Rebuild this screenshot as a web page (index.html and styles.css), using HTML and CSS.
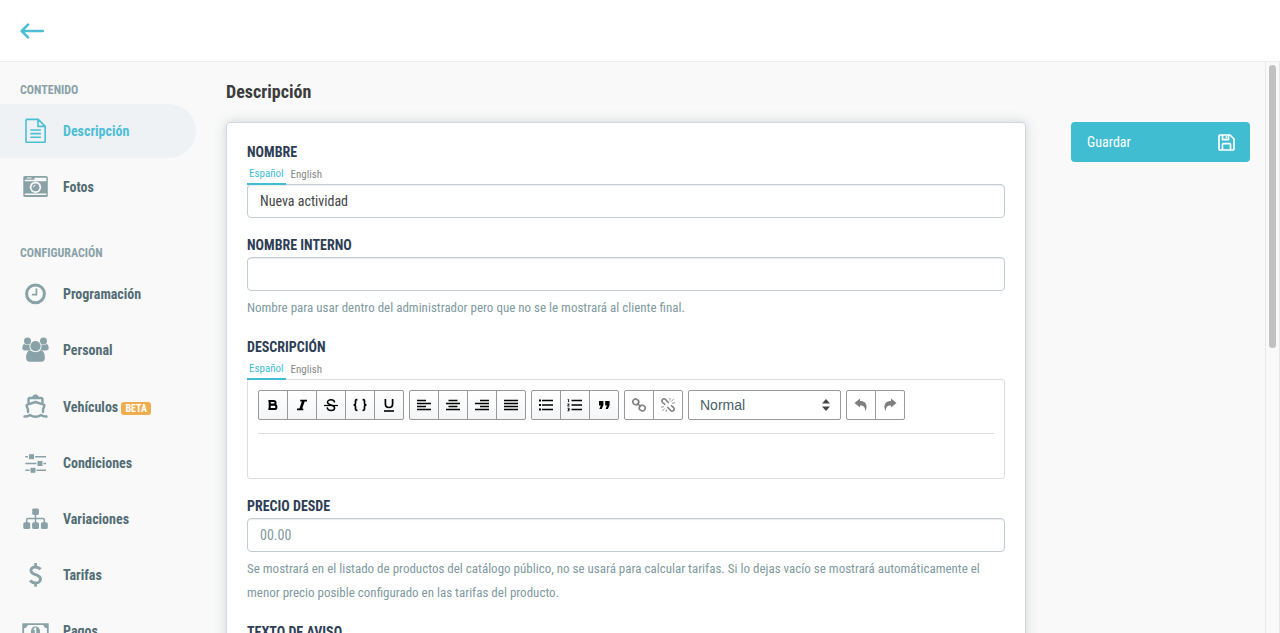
FILE: index.html
```html
<!DOCTYPE html>
<html lang="es">
<head>
<meta charset="utf-8">
<meta name="viewport" content="width=device-width, initial-scale=1">
<title>Descripción</title>
<link rel="stylesheet" href="styles.css">
</head>
<body>
<header class="topbar">
  <a class="back" href="#" aria-label="Volver">
    <svg width="25" height="16" viewBox="0 0 25 16" fill="none" stroke="currentColor" stroke-width="2.6" stroke-linecap="round" stroke-linejoin="round"><path d="M22.800 8H2M8 1.700L1.700 8L8 14.300"/></svg>
  </a>
</header>
<div class="shell">
  <nav class="sidebar">
    <h2 class="nav-title">Contenido</h2>
    <ul class="nav-list">
      <li><a class="nav-item active" href="#"><svg class="nav-icon" viewBox="0 0 31 30"><path d="M6.800 3.400h11.400l7 7V25.500a.8.800 0 0 1-.8.800H6.800a.8.800 0 0 1-.8-.8V4.200a.8.800 0 0 1 .8-.8zM18 3.500v6.900h7M10.300 14h10.600M10.300 17.600h10.600M10.300 21.200h10.600" fill="none" stroke="currentColor" stroke-width="1.600"/></svg>Descripción</a></li>
      <li><a class="nav-item" href="#"><svg class="nav-icon" viewBox="0 0 31 30"><rect x="3.300" y="4" width="24.500" height="21" rx="1.600" fill="currentColor"/><path d="M14.500 5.800H26.300V9.200H4.800V7.800h9.700zM7 5.600h4.500v.8H7zM4.800 21.600h21.500v1.500H4.800z" fill="#f9f9f9"/><circle cx="15.500" cy="15.300" r="5.700" fill="#f9f9f9"/><circle cx="15.500" cy="15.300" r="3.900" fill="currentColor"/><path d="M13.400 15.300a2.100 2.100 0 0 1 2.100-2.100" fill="none" stroke="#f9f9f9" stroke-width=".9"/></svg>Fotos</a></li>
    </ul>
    <h2 class="nav-title">Configuración</h2>
    <ul class="nav-list">
      <li><a class="nav-item" href="#"><svg class="nav-icon" viewBox="0 0 31 30" fill="none" stroke="currentColor"><circle cx="15.500" cy="14.800" r="8.900" stroke-width="3"/><path d="M16.400 9.600v6h-4.500" stroke-width="1.700"/></svg>Programación</a></li>
      <li><a class="nav-item" href="#"><svg class="nav-icon" viewBox="0 0 31 30" fill="currentColor"><circle cx="7.500" cy="6" r="3.500"/><circle cx="23.500" cy="6" r="3.500"/><path d="M4.500 9C5.500 10 8 10.300 9.600 9.300c-.5 2.400 0 4.300 1.300 6.100H5.200c-1.900 0-3-.9-2.900-2.500.1-1.800.8-3.900 2.200-3.900zM26.500 9c-1 1-3.500 1.300-5.100.3.500 2.400 0 4.300-1.300 6.100h5.700c1.900 0 3-.9 2.900-2.500-.1-1.800-.8-3.900-2.200-3.900z"/><circle cx="15.500" cy="11.200" r="5.100"/><path d="M10.600 15.600c3.200 2.200 6.600 2.200 9.800 0 3.100-.2 4.500 3.400 4.500 7.200 0 2.600-1.300 4-3.700 4H9.800c-2.400 0-3.700-1.400-3.700-4 0-3.800 1.400-7.400 4.500-7.200z"/></svg>Personal</a></li>
      <li><a class="nav-item with-badge" href="#"><svg class="nav-icon" viewBox="0 0 31 30" fill="none" stroke="currentColor" stroke-width="2.400" stroke-linecap="round" stroke-linejoin="round"><path d="M8.500 10.500V7.500q0-1.500 1.500-1.500H21q1.500 0 1.500 1.500v3M13.500 4.700q2-2.600 4 0M8 20V17.500L6.600 14q-.3-1 .7-1.400L15.500 10l8.200 2.600q1 .4.700 1.400L23 17.500V20M4.500 24.500q3.500.2 5.500-1.500 2.500 1.800 5.500 1.800T21 23q2 1.700 5.500 1.500"/></svg><span>Vehículos <span class="badge">BETA</span></span></a></li>
      <li><a class="nav-item" href="#"><svg class="nav-icon" viewBox="0 0 31 30" fill="currentColor"><path d="M5.300 8h20.700v1.400H5.300zM5.300 14.800h20.700v1.400H5.300zM5.300 21.600h20.700V23H5.300z"/><g stroke="#f9f9f9"><rect x="8.500" y="5.700" width="6" height="6" rx="1.200"/><rect x="17" y="12.500" width="6" height="6" rx="1.200"/><rect x="10" y="19.300" width="6" height="6" rx="1.200"/></g></svg>Condiciones</a></li>
      <li><a class="nav-item" href="#"><svg class="nav-icon" viewBox="0 0 31 30" fill="currentColor"><rect x="12.200" y="4.400" width="6.700" height="6.500" rx="1.400"/><rect x="3.300" y="18.300" width="6.900" height="6.800" rx="1.600"/><rect x="12.100" y="18.300" width="6.900" height="6.800" rx="1.600"/><rect x="20.900" y="18.300" width="6.900" height="6.800" rx="1.600"/><path d="M15.500 10v9M6.700 19v-3.200q0-1.300 1.300-1.300h15q1.300 0 1.300 1.300V19" fill="none" stroke="currentColor" stroke-width="1.500"/></svg>Variaciones</a></li>
      <li><a class="nav-item" href="#"><svg class="nav-icon" viewBox="0 0 31 30" fill="none" stroke="currentColor"><path d="M15.600 3v4M15.600 22.500v4.300" stroke-width="2.600"/><path d="M20.700 9.200C18.800 7.600 17.300 7 15.300 7c-2.500 0-4.300 1.300-4.300 3.400 0 5 9.500 3.400 9.500 8.600 0 2.400-2 4-4.900 4-2.200 0-4.100-.9-5.500-2.500" stroke-width="2.900"/></svg>Tarifas</a></li>
      <li><a class="nav-item" href="#"><svg class="nav-icon" viewBox="0 0 31 30"><path d="M3.200 8.200h24.600v14H3.200z" fill="none" stroke="currentColor" stroke-width="1.800"/><path d="M3 8h5q-.5 4-5 4.500zM28 8h-5q.5 4 5 4.500zM3 22.400h5q-.5-4-5-4.500zM28 22.400h-5q.5-4 5-4.500z" fill="currentColor"/><ellipse cx="15.500" cy="15.800" rx="4.600" ry="5.600" fill="currentColor"/><path d="M13.700 13.600l1.800-1.300V18.500M13.500 18.500h4" fill="none" stroke="#f9f9f9" stroke-width="1.400"/></svg>Pagos</a></li>
    </ul>
  </nav>
  <main class="content">
    <h1 class="page-title">Descripción</h1>
    <div class="columns">
      <form class="card" id="activity">
        <div class="field">
          <label class="label" for="name">Nombre</label>
          <div class="tabs"><button type="button" class="tab selected">Español</button><button type="button" class="tab">English</button></div>
          <input class="input" id="name" type="text" value="Nueva actividad">
        </div>
        <div class="field">
          <label class="label" for="internal">Nombre interno</label>
          <input class="input" id="internal" type="text">
          <p class="help">Nombre para usar dentro del administrador pero que no se le mostrará al cliente final.</p>
        </div>
        <div class="field">
          <label class="label" for="description">Descripción</label>
          <div class="tabs"><button type="button" class="tab selected">Español</button><button type="button" class="tab">English</button></div>
          <div class="editor">
            <div class="toolbar">
              <div class="group">
                <button type="button" class="tool" aria-label="Negrita"><svg viewBox="0 0 18 18"><path d="M5.700 4v10M4.400 4.900h5.300a1.800 1.800 0 0 1 0 3.700H6M6 8.700h4.200a2.200 2.200 0 0 1 0 4.400H4.400" stroke-width="2"/></svg></button>
                <button type="button" class="tool" aria-label="Cursiva"><svg viewBox="0 0 18 18"><path d="M7.200 4.600H14M4 13.400h6.300" stroke-width="1.800"/><path d="M10.600 4.500L7.500 13.500" stroke-width="2.600"/></svg></button>
                <button type="button" class="tool" aria-label="Tachado"><svg viewBox="0 0 18 18"><path d="M12.600 6.500C12.300 4.700 11 3.800 9 3.800c-2.100 0-3.500 1-3.500 2.500C5.500 8 7.300 8.500 9 9s3.600 1.100 3.600 2.900c0 1.600-1.400 2.500-3.500 2.500-2.300 0-3.800-1-4-3" stroke-width="1.500"/><path d="M2 9.500h14" stroke-width="1.200"/></svg></button>
                <button type="button" class="tool" aria-label="Código"><svg viewBox="0 0 18 18"><path d="M6.400 3.700H5.700Q4.500 3.700 4.500 5v2.300Q4.500 9 2.500 9q2 0 2 1.700V13q0 1.300 1.200 1.300h.7M11.600 3.700h.7q1.200 0 1.200 1.300v2.300q0 1.700 2 1.700-2 0-2 1.700V13q0 1.300-1.200 1.300h-.7" stroke-width="1.700"/></svg></button>
                <button type="button" class="tool" aria-label="Subrayado"><svg viewBox="0 0 18 18"><path d="M5.400 3v4.700c0 2.400 1.200 3.800 3.600 3.800s3.600-1.400 3.600-3.800V3" stroke-width="1.700"/><path d="M4 15h10" stroke-width="1.600"/></svg></button>
              </div>
              <div class="group">
                <button type="button" class="tool" aria-label="Alinear a la izquierda"><svg viewBox="0 0 18 18"><path d="M2 4.500h9M2 7.500h14M2 10.500h9M2 13.500h14"/></svg></button>
                <button type="button" class="tool" aria-label="Centrar"><svg viewBox="0 0 18 18"><path d="M4.500 4.500h9M2 7.500h14M4.500 10.500h9M2 13.500h14"/></svg></button>
                <button type="button" class="tool" aria-label="Alinear a la derecha"><svg viewBox="0 0 18 18"><path d="M7 4.500h9M2 7.500h14M7 10.500h9M2 13.500h14"/></svg></button>
                <button type="button" class="tool" aria-label="Justificar"><svg viewBox="0 0 18 18"><path d="M2 4.500h14M2 7.500h14M2 10.500h14M2 13.500h14"/></svg></button>
              </div>
              <div class="group">
                <button type="button" class="tool" aria-label="Lista"><svg viewBox="0 0 18 18"><path d="M5 4.500h11M5 9h11M5 13.500h11" /><path d="M2 4.500h2M2 9h2M2 13.500h2" stroke-width="2"/></svg></button>
                <button type="button" class="tool" aria-label="Lista numerada"><svg viewBox="0 0 18 18"><path d="M5.500 4.500H16M5.500 9H16M5.500 13.500H16"/><path d="M1.700 3.500h.9V6M1.500 8h1.700L1.600 10h1.900M1.500 12.200h1.600v2.600H1.500M2 13.500h1" stroke-width=".9"/></svg></button>
                <button type="button" class="tool" aria-label="Cita"><svg viewBox="0 0 18 18"><path d="M4 5h4.400v4L6.700 13H4.400L5.800 9.500H4zM10.200 5h4.400v4l-1.700 4h-2.300L12 9.500h-1.800z" fill="#000" stroke="none"/></svg></button>
              </div>
              <div class="group">
                <button type="button" class="tool" aria-label="Enlace" disabled><svg viewBox="0 0 18 18" stroke-width="2"><rect x="2.800" y="3.200" width="6" height="5.500" rx="2.700" transform="rotate(35 5.800 5.950)"/><rect x="9.200" y="9.300" width="6" height="5.500" rx="2.700" transform="rotate(35 12.200 12.050)"/><path d="M7 7l4 4"/></svg></button>
                <button type="button" class="tool" aria-label="Quitar enlace" disabled><svg viewBox="0 0 18 18"><path d="M6.200 8.800L3.600 6.500C1.600 4 4.500 1.800 6.600 3.500L9.800 7M8.300 11l3.300 3.500c2 1.700 4.800-.5 3-2.900L12 9.300"/><path d="M10.800 4.500l.4-2.500M12.300 5.500l2.500-2.700M13 7.300l3-.6M5 10.700l-3 .5M5.700 12.500L3.300 15M7.500 13.500L7 16" stroke-width=".8"/></svg></button>
              </div>
              <div class="style-picker">
                <select class="style-select" aria-label="Estilo de texto"><option>Normal</option></select>
                <svg class="updown" width="8" height="12" viewBox="0 0 8 12"><path d="M0 4.500L4 0l4 4.500zM0 7.500L4 12l4-4.500z" fill="#444"/></svg>
              </div>
              <div class="group">
                <button type="button" class="tool" aria-label="Deshacer" disabled><svg viewBox="0 0 18 18"><path d="M2.500 7L8 2.500V5c4.500 0 7 2.500 6.500 7-.1 1-.7 2-1.500 3 .4-3.700-1.200-5.500-5-5.500v2z" fill="#000" stroke="none"/></svg></button>
                <button type="button" class="tool" aria-label="Rehacer" disabled><svg viewBox="0 0 18 18"><path d="M15.500 7L10 2.500V5c-4.500 0-7 2.500-6.500 7 .1 1 .7 2 1.500 3-.4-3.700 1.200-5.500 5-5.500v2z" fill="#000" stroke="none"/></svg></button>
              </div>
            </div>
            <textarea class="editor-text" id="description"></textarea>
          </div>
        </div>
        <div class="field">
          <label class="label" for="price">Precio desde</label>
          <input class="input" id="price" type="text" placeholder="00.00">
          <p class="help">Se mostrará en el listado de productos del catálogo público, no se usará para calcular tarifas. Si lo dejas vacío se mostrará automáticamente el menor precio posible configurado en las tarifas del producto.</p>
        </div>
        <div class="field">
          <label class="label" for="notice">Texto de aviso</label>
          <input class="input" id="notice" type="text">
        </div>
      </form>
      <div class="actions">
        <button class="save" type="submit" form="activity">Guardar
          <svg width="17" height="17" viewBox="0 0 17 17" fill="none" stroke="currentColor" stroke-width="1.700" stroke-linejoin="round"><path d="M2 1h10l4 4v10q0 1-1 1H2q-1 0-1-1V2q0-1 1-1zM4.500 1v4.700h6V1M4.500 16v-5.500q0-.8.8-.8h6.400q.8 0 .8.800V16"/><path d="M8.300 2.200v2.200" stroke-width="1.500"/></svg>
        </button>
      </div>
    </div>
  </main>
  <div class="scroll-track"><div class="scroll-thumb"></div></div>
</div>
</body>
</html>
```
FILE: styles.css
```css
* { box-sizing: border-box; }
body {
  margin: 0;
  height: 100vh;
  display: flex;
  flex-direction: column;
  overflow: hidden;
  background: #f9f9f9;
  color: #444;
  font-family: "Roboto Condensed", "Liberation Sans Narrow", Roboto, sans-serif;
  font-size: 14px;
}
button, input, textarea, select { font: inherit; color: inherit; }
.topbar {
  display: flex;
  align-items: center;
  flex: none;
  height: 62px;
  padding: 0 20px;
  background: #fff;
  border-bottom: 1px solid #eee;
}
.back { display: flex; color: #4dbfd5; }
.shell { display: flex; flex: 1; min-height: 0; }
.sidebar {
  flex: none;
  width: 196px;
  padding-top: 14px;
  overflow-y: auto;
  scrollbar-width: none;
}
.nav-title {
  margin: 0;
  padding-left: 20px;
  font-size: 12px;
  line-height: 28px;
  text-transform: uppercase;
  color: #89a2a8;
}
.nav-list {
  display: flex;
  flex-direction: column;
  gap: 2px;
  margin: 0 0 25px;
  padding: 0;
  list-style: none;
}
.nav-item {
  display: flex;
  align-items: center;
  gap: 12px;
  height: 54px;
  padding-left: 20px;
  border-radius: 0 27px 27px 0;
  font-weight: 700;
  color: #536d75;
  text-decoration: none;
}
.with-badge { height: 55px; }
.nav-icon { flex: none; width: 31px; height: 30px; color: #89a2a8; }
.active { background: #eef2f5; color: #4dbfd5; }
.active .nav-icon { color: #4dbfd5; }
.badge {
  display: inline-block;
  padding: 0 4px;
  border-radius: 3px;
  background: #f0ad4e;
  color: #fff;
  font-size: 10px;
  line-height: 13px;
}
.content {
  flex: 1;
  min-width: 0;
  padding: 16px 15px 30px 30px;
  overflow-y: auto;
  scrollbar-width: none;
}
.page-title { margin: 0 0 16px; font-size: 18px; line-height: 28px; color: #3c3c3c; }
.columns { display: flex; align-items: flex-start; gap: 45px; }
.card {
  display: flex;
  flex-direction: column;
  gap: 15px;
  flex: 1;
  min-width: 0;
  padding: 17px 20px 20px;
  background: #fff;
  border: 1px solid #cfd8e2;
  border-radius: 4px;
  box-shadow: 0 0 12px rgba(83, 109, 105, .25);
}
.label {
  display: block;
  line-height: 24px;
  font-weight: 700;
  text-transform: uppercase;
  color: #2e3e55;
}
.tabs { display: flex; gap: 3px; height: 20px; }
.tab {
  height: 21px;
  padding: 0 2px;
  border: 0;
  background: none;
  font-size: 11px;
  line-height: 19px;
  color: #888;
  z-index: 1;
}
.selected { border-bottom: 2px solid #41bdd2; line-height: 17px; color: #41bdd2; }
.input {
  display: block;
  width: 100%;
  height: 34px;
  padding: 0 12px;
  border: 1px solid #c3ccd4;
  border-radius: 4px;
  background: #fff;
  box-shadow: inset 0 1px 1px rgba(0, 0, 0, .08);
}
.input::placeholder { color: #809a9f; }
.help { margin: 5px 0 0; font-size: 13px; line-height: 24px; color: #809a9f; }
.editor { padding: 10px; border: 1px solid #ddd; border-radius: 3px; background: #fff; }
.toolbar {
  display: flex;
  flex-wrap: wrap;
  gap: 5px;
  padding-bottom: 13px;
  border-bottom: 1px solid #ddd;
}
.group { display: flex; }
.tool {
  display: flex;
  align-items: center;
  justify-content: center;
  width: 30px;
  height: 30px;
  padding: 0;
  border: 1px solid #999;
  background: linear-gradient(#fff, #f3f5f7);
}
.tool + .tool { margin-left: -1px; }
.tool:first-child { border-radius: 2px 0 0 2px; }
.tool:last-child { border-radius: 0 2px 2px 0; }
.tool svg { width: 18px; height: 18px; fill: none; stroke: #000; stroke-width: 1.5; }
.tool:disabled { background: #fff; }
.tool:disabled svg { opacity: .5; }
.style-picker { position: relative; width: 153px; }
.style-select {
  width: 100%;
  height: 30px;
  padding: 0 11px;
  appearance: none;
  border: 1px solid #999;
  border-radius: 2px;
  background: #fff;
  font-family: "Liberation Sans", sans-serif;
  color: #486066;
}
.updown { position: absolute; top: 9px; right: 11px; pointer-events: none; }
.editor-text {
  display: block;
  width: 100%;
  height: 34px;
  padding: 8px 0;
  border: 0;
  resize: none;
  outline: 0;
}
.actions { flex: none; width: 179px; }
.save {
  display: flex;
  align-items: center;
  justify-content: space-between;
  width: 100%;
  height: 40px;
  padding: 0 15px 0 16px;
  border: 0;
  border-radius: 4px;
  background: #41bdd2;
  color: #fff;
}
.scroll-track {
  flex: none;
  width: 15px;
  padding: 3px;
  border: solid #e8e8e8;
  border-width: 0 1px;
}
.scroll-thumb { height: 50%; border-radius: 4px; background: #c1c1c1; }
```
